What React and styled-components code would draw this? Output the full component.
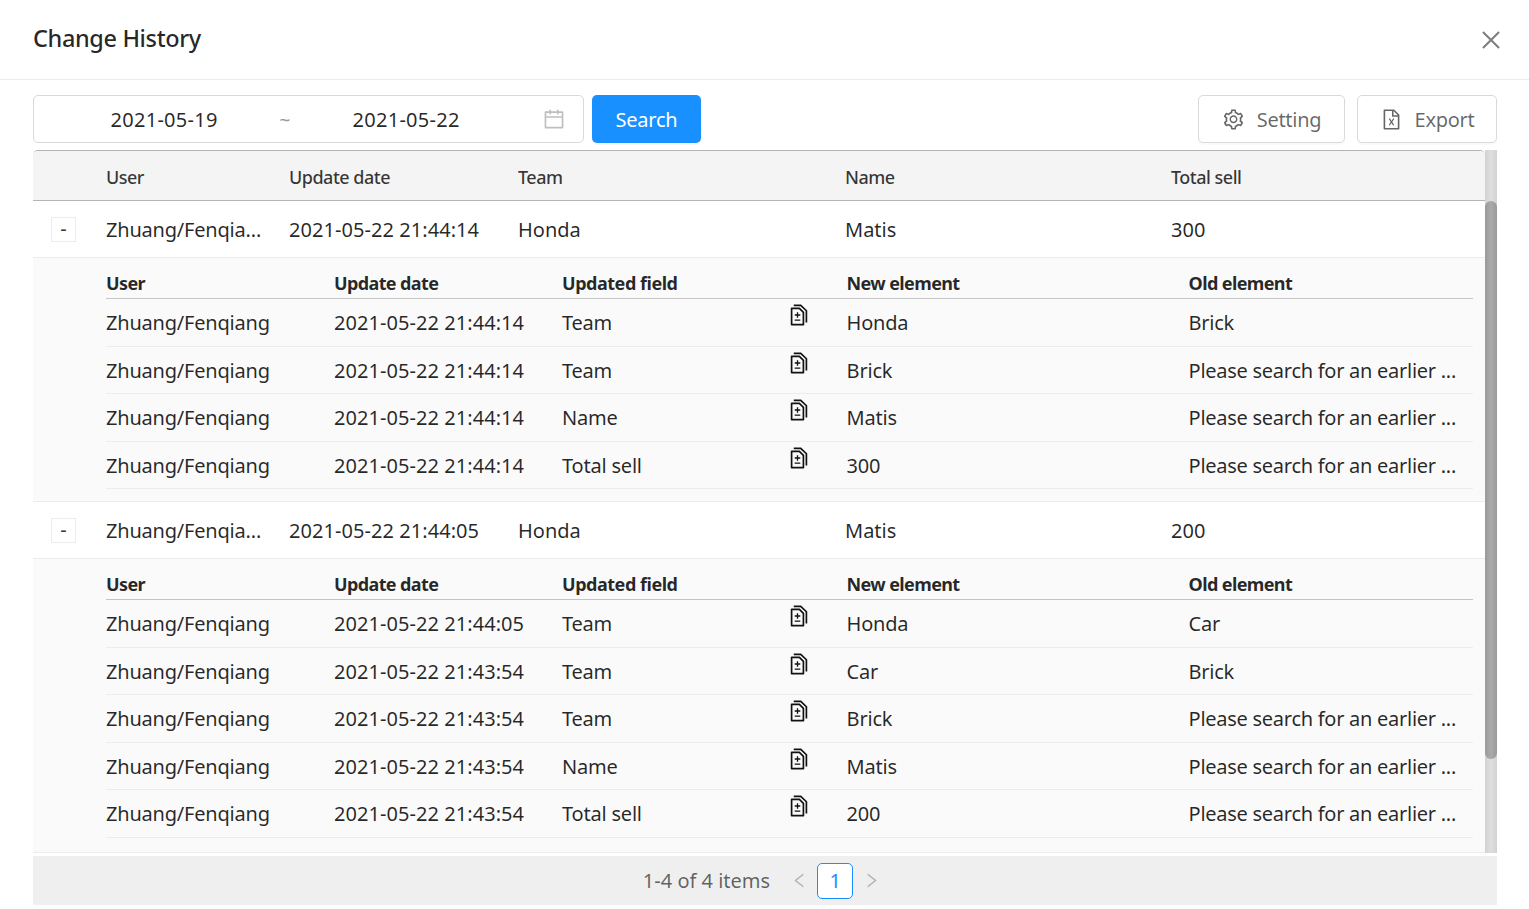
import React from 'react';
import styled, { createGlobalStyle } from 'styled-components';
import {
    AiOutlineClose, AiOutlineCalendar, AiOutlineSetting, AiOutlineFileExcel,
    AiOutlineDiff, AiOutlineLeft, AiOutlineRight,
} from 'react-icons/ai';

const far = 'Please search for an earlier record';

const groups = [
    {
        date: '2021-05-22 21:44:14', team: 'Honda', name: 'Matis', sell: '300', gap: 12,
        rows: [
            ['2021-05-22 21:44:14', 'Team', 'Honda', 'Brick'],
            ['2021-05-22 21:44:14', 'Team', 'Brick', far],
            ['2021-05-22 21:44:14', 'Name', 'Matis', far],
            ['2021-05-22 21:44:14', 'Total sell', '300', far],
        ],
    },
    {
        date: '2021-05-22 21:44:05', team: 'Honda', name: 'Matis', sell: '200', gap: 14,
        rows: [
            ['2021-05-22 21:44:05', 'Team', 'Honda', 'Car'],
            ['2021-05-22 21:43:54', 'Team', 'Car', 'Brick'],
            ['2021-05-22 21:43:54', 'Team', 'Brick', far],
            ['2021-05-22 21:43:54', 'Name', 'Matis', far],
            ['2021-05-22 21:43:54', 'Total sell', '200', far],
        ],
    },
];

const GlobalStyle = createGlobalStyle`
    html, body {
        margin: 0;
        height: 100%;
        overflow: hidden;
        background: #fff;
    }
    body {
        font-family: "Noto Sans", "Open Sans", sans-serif;
        color: rgba(0,0,0,0.85);
    }
    * {
        box-sizing: border-box;
    }
`;

const Modal = styled.div`
    width: 1529px;
    height: 909px;
    display: flex;
    flex-direction: column;
`;

const ModalHeader = styled.div`
    height: 80px;
    flex: none;
    display: flex;
    justify-content: space-between;
    align-items: center;
    padding: 0 25px 0 33px;
    border-bottom: 1px solid #ececec;
`;

const Title = styled.div`
    margin-top: -3px;
    font-size: 23.5px;
    font-weight: 500;
    letter-spacing: -0.37px;
    color: rgba(0,0,0,0.85);
`;

const CloseButton = styled.button`
    display: flex;
    padding: 0;
    border: none;
    background: none;
    color: #7f7f7f;
    font-size: 26px;
`;

const ModalBody = styled.div`
    flex: 1;
    display: flex;
    flex-direction: column;
    padding: 15px 32px 4px 33px;
    min-height: 0;
`;

const Toolbar = styled.div`
    height: 48px;
    flex: none;
    display: flex;
    gap: 8px;
`;

const RangePicker = styled.div`
    width: 551px;
    display: flex;
    align-items: center;
    padding: 0 17px 0 76.5px;
    border: 1px solid #d9d9d9;
    border-radius: 5px;
    font-size: 20px;
`;

const DateText = styled.span`
    width: ${props => props.$w}px;
    letter-spacing: 0.28px;
`;

const Tilde = styled.span`
    width: 73px;
    margin-top: 2px;
    color: #999;
    font-size: 19px;
`;

const CalendarWrap = styled.span`
    display: flex;
    margin-left: auto;
    color: #bfbfbf;
    font-size: 24px;
`;

const PrimaryButton = styled.button`
    width: 109px;
    border: none;
    border-radius: 5px;
    background: #1890ff;
    color: #fff;
    font: inherit;
    font-size: 20px;
    letter-spacing: -0.25px;
    box-shadow: 0 2px 0 rgba(0,0,0,0.04);
`;

const ToolbarRight = styled.div`
    margin-left: auto;
    display: flex;
    gap: 12px;
`;

const GhostButton = styled.button`
    width: ${props => props.$w}px;
    display: flex;
    align-items: center;
    justify-content: center;
    gap: 12px;
    border: 1px solid #d9d9d9;
    border-radius: 5px;
    background: #fff;
    color: rgba(0,0,0,0.6);
    font: inherit;
    font-size: 20px;
    letter-spacing: -0.3px;
    box-shadow: 0 2px 0 rgba(0,0,0,0.02);
    svg {
        font-size: 23px;
    }
`;

const TableArea = styled.div`
    margin-top: 7px;
    height: 703px;
    flex: none;
    display: flex;
`;

const TableMain = styled.div`
    flex: 1;
    min-width: 0;
    overflow: hidden;
    border-top: 1px solid #b4b4b4;
    border-radius: 5px 5px 0 0;
`;

const MainGrid = styled.div`
    display: grid;
    grid-template-columns: 73px 183px 229px 327px 326px 1fr;
    align-items: center;
`;

const HeadRow = styled(MainGrid)`
    height: 50px;
    padding-top: 2px;
    background: #f4f4f4;
    border-bottom: 1px solid #b4b4b4;
    font-size: 18px;
    font-weight: 500;
    letter-spacing: -0.5px;
    color: rgba(0,0,0,0.78);
`;

const ParentRow = styled(MainGrid)`
    height: 57px;
    border-bottom: 1px solid #ececec;
    font-size: 20px;
`;

const ExpandCell = styled.div`
    display: flex;
    padding-left: 18px;
`;

const ExpandButton = styled.button`
    width: 25px;
    height: 25px;
    padding: 0;
    border: 1px solid #ececec;
    background: #fff;
    color: rgba(0,0,0,0.8);
    font: inherit;
    font-size: 20px;
    line-height: 20px;
`;

const Nested = styled.div`
    background: #fafafa;
    padding: 0 12px ${props => props.$gap}px 73px;
    border-bottom: 1px solid #ececec;
`;

const SubGrid = styled.div`
    display: grid;
    grid-template-columns: 228px 228px 284.6px 342px 1fr;
    align-items: center;
`;

const SubHead = styled(SubGrid)`
    height: 41px;
    padding-top: 10px;
    border-bottom: 1px solid #c4c4c4;
    font-size: 18px;
    font-weight: 700;
    letter-spacing: -0.62px;
`;

const SubHeadWide = styled.div`
    letter-spacing: -0.47px;
`;

const SubRow = styled(SubGrid)`
    height: 47.5px;
    padding-top: 0.7px;
    border-bottom: 1px solid #ececec;
    font-size: 20px;
`;

const Words = styled.div`
    letter-spacing: -0.2px;
`;

const Stamp = styled.div`
    letter-spacing: 0.06px;
`;

const FieldCell = styled.div`
    position: relative;
    height: 100%;
    display: flex;
    align-items: center;
    letter-spacing: -0.2px;
`;

const DiffIcon = styled.span`
    position: absolute;
    left: 225.4px;
    top: 3.5px;
    display: flex;
    color: #111;
    font-size: 24px;
`;

const Ellipsis = styled.div`
    overflow: hidden;
    white-space: nowrap;
    text-overflow: ellipsis;
    letter-spacing: -0.27px;
`;

const ScrollTrack = styled.div`
    width: 12px;
    flex: none;
    background: linear-gradient(to right, #d2d2d2, #dedede 50%, #d2d2d2);
    padding-top: 51px;
`;

const ScrollThumb = styled.div`
    height: 558px;
    border-radius: 6px;
    background: linear-gradient(to right, #9a9a9a, #aaaaaa 50%, #9a9a9a);
`;

const Footer = styled.div`
    margin-top: 3px;
    height: 49px;
    flex: none;
    background: #efefef;
    display: flex;
    align-items: center;
    justify-content: center;
    gap: 6px;
    padding-right: 4px;
    font-size: 20px;
    color: rgba(0,0,0,0.6);
`;

const PageTotal = styled.span`
    margin-right: 11px;
`;

const PageArrow = styled.span`
    width: 24px;
    display: flex;
    justify-content: center;
    color: #b5b5b5;
    font-size: 19px;
`;

const PageCurrent = styled.span`
    width: 36px;
    height: 36px;
    display: flex;
    align-items: center;
    justify-content: center;
    border: 1px solid #1890ff;
    border-radius: 5px;
    background: #fff;
    color: #1890ff;
`;

function Group({ group }) {
    return (
        <>
            <ParentRow>
                <ExpandCell><ExpandButton>-</ExpandButton></ExpandCell>
                <Words>Zhuang/Fenqia...</Words>
                <Stamp>{group.date}</Stamp>
                <div>{group.team}</div>
                <div>{group.name}</div>
                <div>{group.sell}</div>
            </ParentRow>
            <Nested $gap={group.gap}>
                <SubHead>
                    <div>User</div>
                    <div>Update date</div>
                    <SubHeadWide>Updated field</SubHeadWide>
                    <div>New element</div>
                    <div>Old element</div>
                </SubHead>
                {group.rows.map((row, i) => (
                    <SubRow key={i}>
                        <Words>Zhuang/Fenqiang</Words>
                        <Stamp>{row[0]}</Stamp>
                        <FieldCell>
                            {row[1]}
                            <DiffIcon><AiOutlineDiff /></DiffIcon>
                        </FieldCell>
                        <Words>{row[2]}</Words>
                        <Ellipsis>{row[3] === far ? 'Please search for an earlier ...' : row[3]}</Ellipsis>
                    </SubRow>
                ))}
            </Nested>
        </>
    );
}

export default function App() {
    return (
        <Modal>
            <GlobalStyle />
            <ModalHeader>
                <Title>Change History</Title>
                <CloseButton><AiOutlineClose /></CloseButton>
            </ModalHeader>
            <ModalBody>
                <Toolbar>
                    <RangePicker>
                        <DateText $w={169}>2021-05-19</DateText>
                        <Tilde>~</Tilde>
                        <DateText $w={110}>2021-05-22</DateText>
                        <CalendarWrap><AiOutlineCalendar /></CalendarWrap>
                    </RangePicker>
                    <PrimaryButton>Search</PrimaryButton>
                    <ToolbarRight>
                        <GhostButton $w={147}><AiOutlineSetting />Setting</GhostButton>
                        <GhostButton $w={140}><AiOutlineFileExcel />Export</GhostButton>
                    </ToolbarRight>
                </Toolbar>
                <TableArea>
                    <TableMain>
                        <HeadRow>
                            <div />
                            <div>User</div>
                            <div>Update date</div>
                            <div>Team</div>
                            <div>Name</div>
                            <div>Total sell</div>
                        </HeadRow>
                        {groups.map((group, i) => <Group key={i} group={group} />)}
                    </TableMain>
                    <ScrollTrack><ScrollThumb /></ScrollTrack>
                </TableArea>
                <Footer>
                    <PageTotal>1-4 of 4 items</PageTotal>
                    <PageArrow><AiOutlineLeft /></PageArrow>
                    <PageCurrent>1</PageCurrent>
                    <PageArrow><AiOutlineRight /></PageArrow>
                </Footer>
            </ModalBody>
        </Modal>
    );
}
